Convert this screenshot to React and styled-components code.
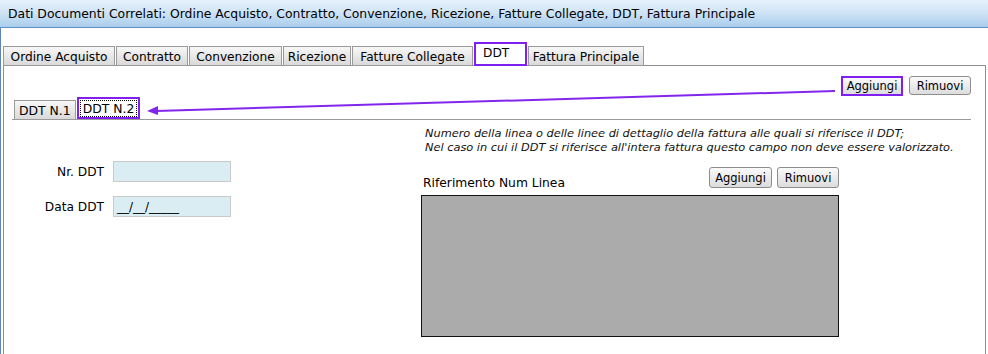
import React from "react";
import styled, { createGlobalStyle } from "styled-components";

const GlobalStyle = createGlobalStyle`
  body {
    margin: 0;
    background: #ffffff;
    font-family: "DejaVu Sans", Verdana, sans-serif;
    color: #000;
  }
`;

const Page = styled.div`
  position: relative;
  width: 988px;
  height: 354px;
  overflow: hidden;
  background: #fff;
`;

const Header = styled.div`
  height: 28px;
  box-sizing: border-box;
  padding-left: 8px;
  display: flex;
  align-items: center;
  font-size: 12.4px;
  background: linear-gradient(#e8f2fc 0%, #d0e4f6 45%, #aacdec 100%);
  border-bottom: 1px solid #5f8fc3;
`;

const Body = styled.div`
  box-sizing: border-box;
  border-left: 1px solid #5f86b3;
  padding: 15px 2px 0 2px;
  display: flex;
  flex-direction: column;
`;

const TabBar = styled.div`
  display: flex;
  align-items: flex-end;
  gap: 1px;
  height: 23px;
  margin-bottom: -1px;
  position: relative;
  z-index: 1;
`;

const Tab = styled.div`
  box-sizing: border-box;
  flex-shrink: 0;
  width: ${(p) => p.$w}px;
  height: ${(p) => (p.$active ? "24px" : "20px")};
  padding: ${(p) => (p.$active ? "2px 0 0 7px" : "1px 0 0 0")};
  display: flex;
  justify-content: ${(p) => (p.$active ? "flex-start" : "center")};
  align-items: ${(p) => (p.$active ? "flex-start" : "center")};
  font-size: 12.2px;
  white-space: nowrap;
  border: ${(p) => (p.$active ? "2px solid #7f1ff2" : "1px solid #9a9a9a")};
  background: ${(p) => (p.$active ? "#fff" : "linear-gradient(#f7f7f7, #d9d9d9)")};
`;

const Panel = styled.div`
  height: 320px;
  border: 1px solid #8e8e8e;
  padding: 10px 14px 0 0;
`;

const Toolbar = styled.div`
  display: flex;
  justify-content: flex-end;
  gap: 6px;
  height: 20px;
`;

const Button = styled.div`
  box-sizing: border-box;
  width: ${(p) => p.$w || 62}px;
  height: ${(p) => p.$h || 19}px;
  display: flex;
  align-items: center;
  justify-content: center;
  font-size: 11.5px;
  border-radius: 3px;
  border: 1px solid #8d8d8d;
  background: linear-gradient(#fafafa, #dcdcdc);
  ${(p) => p.$focus && "border-radius: 0; border: 2px solid #7f1ff2;"}
`;

const SubStrip = styled.div`
  display: flex;
  align-items: flex-end;
  margin: 1px 0 0 8px;
  padding-left: 2px;
  height: 22px;
  border-bottom: 1px solid #9a9a9a;
`;

const SubTab = styled.div`
  box-sizing: border-box;
  height: ${(p) => (p.$active ? "22px" : "19px")};
  font-size: 12.4px;
  display: flex;
  align-items: center;
  padding: 0 4px;
  margin-right: ${(p) => (p.$active ? "0" : "1px")};
  border: ${(p) => (p.$active ? "2px solid #7f1ff2" : "1px solid #9a9a9a")};
  border-bottom: ${(p) => (p.$active ? "2px solid #7f1ff2" : "none")};
  background: ${(p) => (p.$active ? "#fff" : "linear-gradient(#f7f7f7, #d9d9d9)")};
`;

const Focus = styled.span`
  outline: 1px dotted #000;
  padding: 0 2px;
  margin: 0 -2px;
`;

const Content = styled.div`
  display: grid;
  grid-template-columns: 417px 418px;
`;

const Form = styled.div`
  display: grid;
  grid-template-columns: 100px 118px;
  column-gap: 9px;
  row-gap: 14px;
  align-items: center;
  align-content: start;
  margin-top: 41px;
`;

const Label = styled.div`
  text-align: right;
  font-size: 12.2px;
`;

const Input = styled.div`
  box-sizing: border-box;
  height: 21px;
  background: #daedf3;
  border: 1px solid #c9c9c9;
  padding-left: 3px;
  font-size: 12px;
  display: flex;
  align-items: center;
`;

const RightCol = styled.div`
  display: flex;
  flex-direction: column;
`;

const Note = styled.div`
  margin: 6px 0 0 4px;
  font-size: 11.35px;
  font-style: italic;
  line-height: 14px;
  color: #111;
  white-space: nowrap;
`;

const ListHead = styled.div`
  display: flex;
  justify-content: space-between;
  align-items: flex-end;
  margin-top: 13px;
  padding-left: 2px;
`;

const Caption = styled.div`
  font-size: 12.3px;
  margin-bottom: -1px;
`;

const Buttons = styled.div`
  display: flex;
  gap: 5px;
  margin-bottom: 1px;
`;

const ListBox = styled.div`
  margin-top: 6px;
  height: 142px;
  background: #ababab;
  border: 1px solid #111;
  box-sizing: border-box;
`;

const Arrow = styled.svg`
  position: absolute;
  left: 0;
  top: 0;
  pointer-events: none;
`;

const tabs = [
  { label: "Ordine Acquisto", w: 112 },
  { label: "Contratto", w: 72 },
  { label: "Convenzione", w: 93 },
  { label: "Ricezione", w: 68 },
  { label: "Fatture Collegate", w: 121 },
  { label: "DDT", w: 53, active: true },
  { label: "Fattura Principale", w: 116 },
];

const App = () => {
  return (
    <Page>
      <GlobalStyle />
      <Header>
        Dati Documenti Correlati: Ordine Acquisto, Contratto, Convenzione, Ricezione, Fatture
        Collegate, DDT, Fattura Principale
      </Header>
      <Body>
        <TabBar>
          {tabs.map((t) => (
            <Tab key={t.label} $w={t.w} $active={t.active}>
              {t.label}
            </Tab>
          ))}
        </TabBar>
        <Panel>
          <Toolbar>
            <Button $focus $h={20}>
              Aggiungi
            </Button>
            <Button>Rimuovi</Button>
          </Toolbar>
          <SubStrip>
            <SubTab>DDT N.1</SubTab>
            <SubTab $active>
              <Focus>DDT N.2</Focus>
            </SubTab>
          </SubStrip>
          <Content>
            <Form>
              <Label>Nr. DDT</Label>
              <Input />
              <Label>Data DDT</Label>
              <Input>__/__/_____</Input>
            </Form>
            <RightCol>
              <Note>
                Numero della linea o delle linee di dettaglio della fattura alle quali si riferisce
                il DDT;
                <br />
                Nel caso in cui il DDT si riferisce all'intera fattura questo campo non deve essere
                valorizzato.
              </Note>
              <ListHead>
                <Caption>Riferimento Num Linea</Caption>
                <Buttons>
                  <Button $w={63} $h={21}>
                    Aggiungi
                  </Button>
                  <Button $h={21}>Rimuovi</Button>
                </Buttons>
              </ListHead>
              <ListBox />
            </RightCol>
          </Content>
        </Panel>
      </Body>
      <Arrow width="988" height="354">
        <line x1="835" y1="91" x2="156" y2="111" stroke="#8326ec" strokeWidth="2" />
        <polygon points="147,111 158,106 158,115" fill="#8326ec" />
      </Arrow>
    </Page>
  );
};

export default App;
